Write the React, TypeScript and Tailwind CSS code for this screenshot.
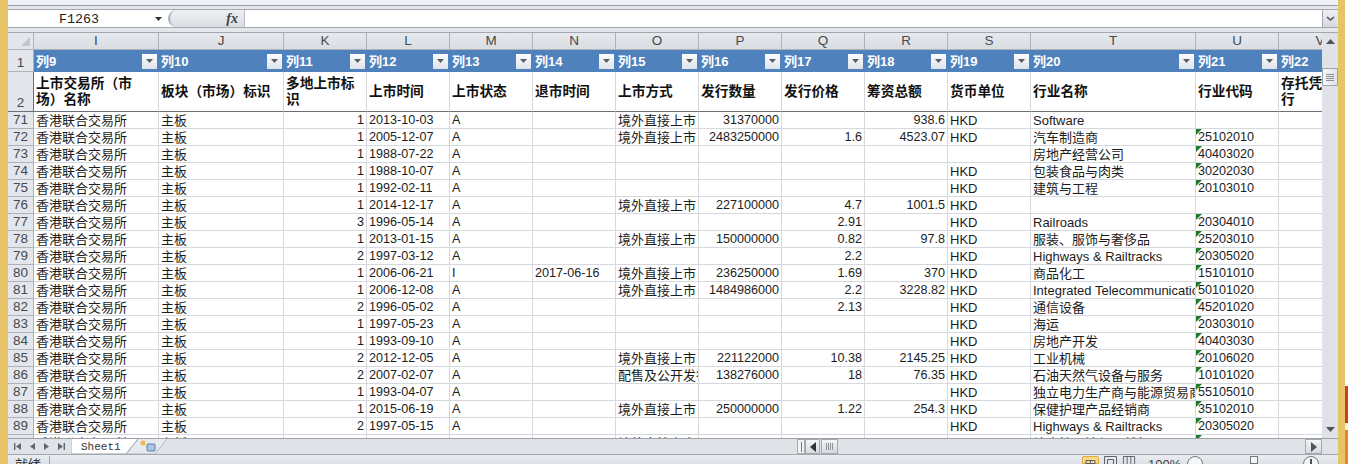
import React from "react";

const FONT = "font-['Liberation_Sans','Noto_Sans_CJK_SC',sans-serif]";
const COLS = "grid grid-cols-[26px_125px_125px_83px_83px_83px_83px_83px_83px_83px_83px_83px_165px_83px_83px]";
const LETTERS = ["I","J","K","L","M","N","O","P","Q","R","S","T","U","V"];
const HEAD = ["上市交易所（市场）名称","板块（市场）标识","多地上市标识","上市时间","上市状态","退市时间","上市方式","发行数量","发行价格","筹资总额","货币单位","行业名称","行业代码","存托凭证发行"];
const M = "香港联合交易所";
const Z = "境外直接上市";
type R = [number, string, string, string, string, string, string, string, string, string, string, string];
const DATA: R[] = [
  [71,"1","2013-10-03","A","",Z,"31370000","","938.6","HKD","Software",""],
  [72,"1","2005-12-07","A","",Z,"2483250000","1.6","4523.07","HKD","汽车制造商","25102010"],
  [73,"1","1988-07-22","A","","","","","","","房地产经营公司","40403020"],
  [74,"1","1988-10-07","A","","","","","","HKD","包装食品与肉类","30202030"],
  [75,"1","1992-02-11","A","","","","","","HKD","建筑与工程","20103010"],
  [76,"1","2014-12-17","A","",Z,"227100000","4.7","1001.5","HKD","",""],
  [77,"3","1996-05-14","A","","","","2.91","","HKD","Railroads","20304010"],
  [78,"1","2013-01-15","A","",Z,"150000000","0.82","97.8","HKD","服装、服饰与奢侈品","25203010"],
  [79,"2","1997-03-12","A","","","","2.2","","HKD","Highways & Railtracks","20305020"],
  [80,"1","2006-06-21","I","2017-06-16",Z,"236250000","1.69","370","HKD","商品化工","15101010"],
  [81,"1","2006-12-08","A","",Z,"1484986000","2.2","3228.82","HKD","Integrated Telecommunications","50101020"],
  [82,"2","1996-05-02","A","","","","2.13","","HKD","通信设备","45201020"],
  [83,"1","1997-05-23","A","","","","","","HKD","海运","20303010"],
  [84,"1","1993-09-10","A","","","","","","HKD","房地产开发","40403030"],
  [85,"2","2012-12-05","A","",Z,"221122000","10.38","2145.25","HKD","工业机械","20106020"],
  [86,"2","2007-02-07","A","","配售及公开发行","138276000","18","76.35","HKD","石油天然气设备与服务","10101020"],
  [87,"1","1993-04-07","A","","","","","","HKD","独立电力生产商与能源贸易商","55105010"],
  [88,"1","2015-06-19","A","",Z,"250000000","1.22","254.3","HKD","保健护理产品经销商","35102010"],
  [89,"2","1997-05-15","A","","","","","","HKD","Highways & Railtracks","20305020"],
  [90,"1","2010-07-09","A","",Z,"","","","HKD","综合性石油与天然气","10102010"],
];

function Filter() {
  return (
    <span className="flex h-[15px] w-[15px] shrink-0 items-center justify-center bg-gradient-to-b from-[#fbfcfd] to-[#dfe4ea]">
      <svg width="7" height="4" viewBox="0 0 7 4"><path d="M0 0h7L3.5 4z" fill="#5a5f66" /></svg>
    </span>
  );
}

function Cell({ v, right, last }: { v: string; right?: boolean; last?: boolean }) {
  const cjk = /[^\x00-\x7f]/.test(v);
  const word = /[A-Za-z]{2}/.test(v);
  const size = cjk ? "pl-[2px] text-[13px]" : word ? "pt-[1px] text-[13px]" : "pt-[1px] text-[12.6px]";
  const side = right ? "justify-end pr-[2px]" : cjk ? "" : "pl-[2px]";
  return (
    <div className={`relative flex h-full items-center overflow-hidden whitespace-nowrap border-r border-b border-[#d5d8dd] leading-none text-[#1c1c1c] ${size} ${side}`}>
      {last && v ? (
        <svg className="absolute top-0 left-0" width="6" height="6" viewBox="0 0 6 6"><path d="M0 0h6L0 6z" fill="#1f7a2e" /></svg>
      ) : null}
      {v}
    </div>
  );
}

function Row({ r }: { r: R }) {
  return (
    <div className={`${COLS} h-[17px]`}>
      <div className="flex items-center justify-center border-r border-b border-[#aeb3ba] bg-[#e3e6ea] text-[13.5px] leading-none text-[#454a50]">{r[0]}</div>
      <Cell v={M} />
      <Cell v="主板" />
      <Cell v={r[1]} right />
      <Cell v={r[2]} />
      <Cell v={r[3]} />
      <Cell v={r[4]} />
      <Cell v={r[5]} />
      <Cell v={r[6]} right />
      <Cell v={r[7]} right />
      <Cell v={r[8]} right />
      <Cell v={r[9]} />
      <Cell v={r[10]} />
      <Cell v={r[11]} last />
      <Cell v="" />
    </div>
  );
}

function NavTri({ d }: { d: string }) {
  return (
    <svg width="11" height="11" viewBox="0 0 11 11"><path d={d} fill="#5f6670" /></svg>
  );
}

function ViewIcon({ w, active, d }: { w: string; active?: boolean; d: string }) {
  return (
    <div className={`h-full shrink-0 ${w} ${active ? "rounded-t-[2px] border border-[#e2a93a] bg-[#fbd98c]" : ""}`}>
      <svg width="100%" height="9" viewBox="0 0 15 9" preserveAspectRatio="none"><path d={d} fill="none" stroke="#5b6168" /></svg>
    </div>
  );
}

export default function App() {
  return (
    <div className={`flex h-[464px] w-[1348px] overflow-hidden bg-white ${FONT}`}>
      <div className="w-[8px] shrink-0 bg-[#e8c469]" />
      <div className="flex w-[1330px] shrink-0 flex-col bg-[#e3e7ec]">
        <div className="h-[5px] shrink-0 bg-[#eef1f5]" />
        <div className="h-[1px] shrink-0 bg-[#9ea2a8]" />
        <div className="h-[3px] shrink-0 bg-[#e3e7ec]" />
        {/* formula bar */}
        <div className="flex h-[19px] shrink-0 border-y border-[#a4a8ae] bg-white">
          <div className="flex w-[160px] shrink-0 items-center justify-between bg-white pr-[6px] pl-[51px]">
            <span className="pt-[3px] font-['Liberation_Mono',monospace] text-[13.3px] leading-none text-[#222]">F1263</span>
            <svg width="7" height="4" viewBox="0 0 7 4"><path d="M0 0h7L3.5 4z" fill="#333" /></svg>
          </div>
          <div className="flex w-[77px] shrink-0 items-center justify-end rounded-l-full border-l-2 border-[#aab0b8] border-r border-r-[#b8bcc2] bg-gradient-to-b from-[#eef0f3] to-[#d9dde2] pr-[6px]">
            <span className="font-['Liberation_Serif',serif] text-[14px] leading-none font-bold text-[#444] italic">fx</span>
          </div>
          <div className="flex-1 bg-white" />
          <div className="flex w-[15px] shrink-0 items-center justify-center border-l border-[#a4a8ae] bg-gradient-to-b from-[#eef0f3] to-[#d5d9df]">
            <svg width="9" height="6" viewBox="0 0 9 6"><path d="M1 1l3.5 3L8 1" fill="none" stroke="#4a5058" strokeWidth="1.6" /></svg>
          </div>
          <div className="w-[1px] shrink-0 bg-[#e3e7ec]" />
        </div>
        <div className="h-[4px] shrink-0 bg-[#e3e7ec]" />
        <div className="h-[1px] shrink-0 bg-[#a4a8ae]" />
        {/* sheet + vertical scrollbar */}
        <div className="flex h-[405px] shrink-0">
          <div className="h-full w-[1314px] shrink-0 overflow-hidden bg-white">
            <div className={`${COLS} h-[17px]`}>
              <div className="flex items-end justify-end border-r border-b border-[#aeb3ba] bg-[#e3e6ea] p-[3px]">
                <svg width="9" height="9" viewBox="0 0 9 9"><path d="M9 0v9H0z" fill="#c2c6cc" /></svg>
              </div>
              {LETTERS.map((l) => (
                <div key={l} className="flex items-center justify-center border-r border-b border-[#aeb3ba] bg-gradient-to-b from-[#e6e9ed] to-[#d9dce1] text-[13.5px] leading-none text-[#454a50]">{l}</div>
              ))}
            </div>
            <div className={`${COLS} h-[22px]`}>
              <div className="flex items-end justify-center border-r border-b border-[#aeb3ba] bg-[#e3e6ea] pb-[1px] text-[13.5px] leading-[14px] text-[#454a50]">1</div>
              {LETTERS.map((_, i) => (
                <div key={i} className="flex items-center justify-between bg-[#4f81bd] pr-[2px] pl-[2px] text-[13px] leading-none font-bold text-white">
                  <span>列{i + 9}</span>
                  <Filter />
                </div>
              ))}
            </div>
            <div className={`${COLS} h-[40px]`}>
              <div className="flex items-end justify-center border-r border-b border-[#6b7076] bg-[#e3e6ea] text-[13.5px] leading-[16px] text-[#454a50]">2</div>
              {HEAD.map((h) => (
                <div key={h} className="flex items-center border-r border-b border-r-[#d5d8dd] border-b-[#6b7076] pl-[2px] text-[13.7px] leading-[16px] font-bold text-[#111] [text-spacing-trim:space-all]">
                  <span className="block">{h}</span>
                </div>
              ))}
            </div>
            {DATA.map((r) => (
              <Row key={r[0]} r={r} />
            ))}
          </div>
          <div className="flex w-[16px] shrink-0 flex-col items-stretch bg-[#dfe3e8]">
            <div className="flex h-[17px] shrink-0 items-center justify-center">
              <svg width="9" height="5" viewBox="0 0 9 5"><path d="M0 5h9L4.5 0z" fill="#4f555d" /></svg>
            </div>
            <div className="mt-[18px] flex h-[18px] shrink-0 items-center justify-center border border-[#9ea4ac] bg-gradient-to-r from-[#f4f6f8] to-[#dfe3e8]">
              <svg width="8" height="7" viewBox="0 0 8 7"><path d="M0 .5h8M0 2.5h8M0 4.5h8M0 6.5h8" stroke="#8b9199" /></svg>
            </div>
            <div className="flex-1" />
            <div className="flex h-[17px] shrink-0 items-center justify-center">
              <svg width="9" height="5" viewBox="0 0 9 5"><path d="M0 0h9L4.5 5z" fill="#4f555d" /></svg>
            </div>
          </div>
        </div>
        {/* sheet tabs + horizontal scrollbar */}
        <div className="flex h-[16px] shrink-0 items-stretch border-t border-[#9ea2a8] bg-[#dfe3e8]">
          <div className="flex w-[63px] shrink-0 items-center gap-[3.5px] pl-[4px]">
            <NavTri d="M2 2h1.4v7H2zM9 2v7L4 5.5z" />
            <NavTri d="M8 2v7L3 5.5z" />
            <NavTri d="M3 2v7l5-3.5z" />
            <NavTri d="M7.6 2H9v7H7.6zM2 2v7l5-3.5z" />
          </div>
          <div className="relative flex w-[67px] shrink-0 items-center pl-[10px]">
            <svg className="absolute inset-0" width="67" height="15" viewBox="0 0 67 15"><path d="M0 0v15h55L67 0" fill="#fff" stroke="#9ea2a8" /></svg>
            <span className="relative pt-[1px] font-['Liberation_Mono',monospace] text-[11px] leading-none text-[#333]">Sheet1</span>
          </div>
          <div className="-ml-[12px] w-[41px] shrink-0">
            <svg width="41" height="15" viewBox="0 0 41 15">
              <path d="M12 0L0 15h29L41 0" fill="#e6e9ee" stroke="#b4b8be" />
              <rect x="21" y="5" width="8" height="7" rx="1" fill="#a9c6e8" stroke="#5f7f9f" />
              <circle cx="17" cy="4" r="2.5" fill="#f2b84b" />
            </svg>
          </div>
          <div className="flex-1" />
          <div className="flex w-[8px] shrink-0 items-center border border-[#a4a9b0] bg-[#f2f4f6]">
            <div className="mx-auto h-[10px] w-[1px] bg-[#777]" />
          </div>
          <div className="flex w-[15px] shrink-0 items-center justify-center border border-[#a4a9b0] bg-gradient-to-b from-[#f2f4f6] to-[#d6dade]">
            <svg width="6" height="10" viewBox="0 0 6 10"><path d="M6 0v10L0 5z" fill="#333" /></svg>
          </div>
          <div className="ml-[1px] flex w-[17px] shrink-0 items-center justify-center border border-[#a4a9b0] bg-gradient-to-b from-[#f2f4f6] to-[#d6dade]">
            <svg width="8" height="7" viewBox="0 0 8 7"><path d="M.5 0v7M2.5 0v7M4.5 0v7M6.5 0v7" stroke="#8b9199" /></svg>
          </div>
          <div className="w-[467px] shrink-0" />
          <div className="flex w-[17px] shrink-0 items-center justify-center border border-[#a4a9b0] bg-gradient-to-b from-[#f2f4f6] to-[#d6dade]">
            <svg width="6" height="10" viewBox="0 0 6 10"><path d="M0 0v10l6-5z" fill="#4f555d" /></svg>
          </div>
          <div className="w-[16px] shrink-0" />
        </div>
        {/* status bar */}
        <div className="flex h-[10px] shrink-0 items-start overflow-hidden border-t border-[#a4a8ae] bg-gradient-to-b from-[#e9ecf0] to-[#dde1e6] pt-[1px]">
          <div className="w-[7px] shrink-0" />
          <span className="w-[34px] shrink-0 pt-[2px] text-[13px] leading-[13px] text-[#333]">就绪</span>
          <div className="h-full w-[1px] shrink-0 bg-[#a4a8ae]" />
          <div className="w-[1032px] shrink-0" />
          <ViewIcon w="w-[17px]" active d="M3 3.5h9v6M3 3.5v6M3 6.5h9M7.5 3.5v6" />
          <div className="w-[4px] shrink-0" />
          <ViewIcon w="w-[15px]" d="M1.5 9V.5h12V9M4.5 9V3.5h6V9" />
          <div className="w-[4px] shrink-0" />
          <ViewIcon w="w-[14px]" d="M1.5 9V.5h12V9M5.5 .5V9M9.5 .5V9" />
          <span className="ml-[12px] w-[39px] shrink-0 pt-[2px] text-[13px] leading-[13px] text-[#444]">100%</span>
          <div className="h-[16px] w-[16px] shrink-0 rounded-full border border-[#777] bg-[#f4f5f7]" />
          <div className="w-[47px] shrink-0" />
          <div className="h-full w-[8px] shrink-0 border border-[#777] bg-[#f4f5f7]" />
          <div className="w-[45px] shrink-0" />
          <div className="flex h-[16px] w-[16px] shrink-0 justify-center rounded-full border border-[#777] bg-[#f4f5f7] pt-[2px]">
            <div className="h-[10px] w-[2px] bg-[#555]" />
          </div>
        </div>
      </div>
      <div className="w-[7px] shrink-0 bg-[#e8c469]" />
      <div className="flex w-[3px] shrink-0 flex-col">
        <div className="h-[386px] shrink-0 bg-white" />
        <div className="h-[37px] shrink-0 bg-[#c9401f]" />
        <div className="h-[7px] shrink-0 bg-[#fbeecb]" />
        <div className="flex-1 bg-[#e8862c]" />
      </div>
    </div>
  );
}
